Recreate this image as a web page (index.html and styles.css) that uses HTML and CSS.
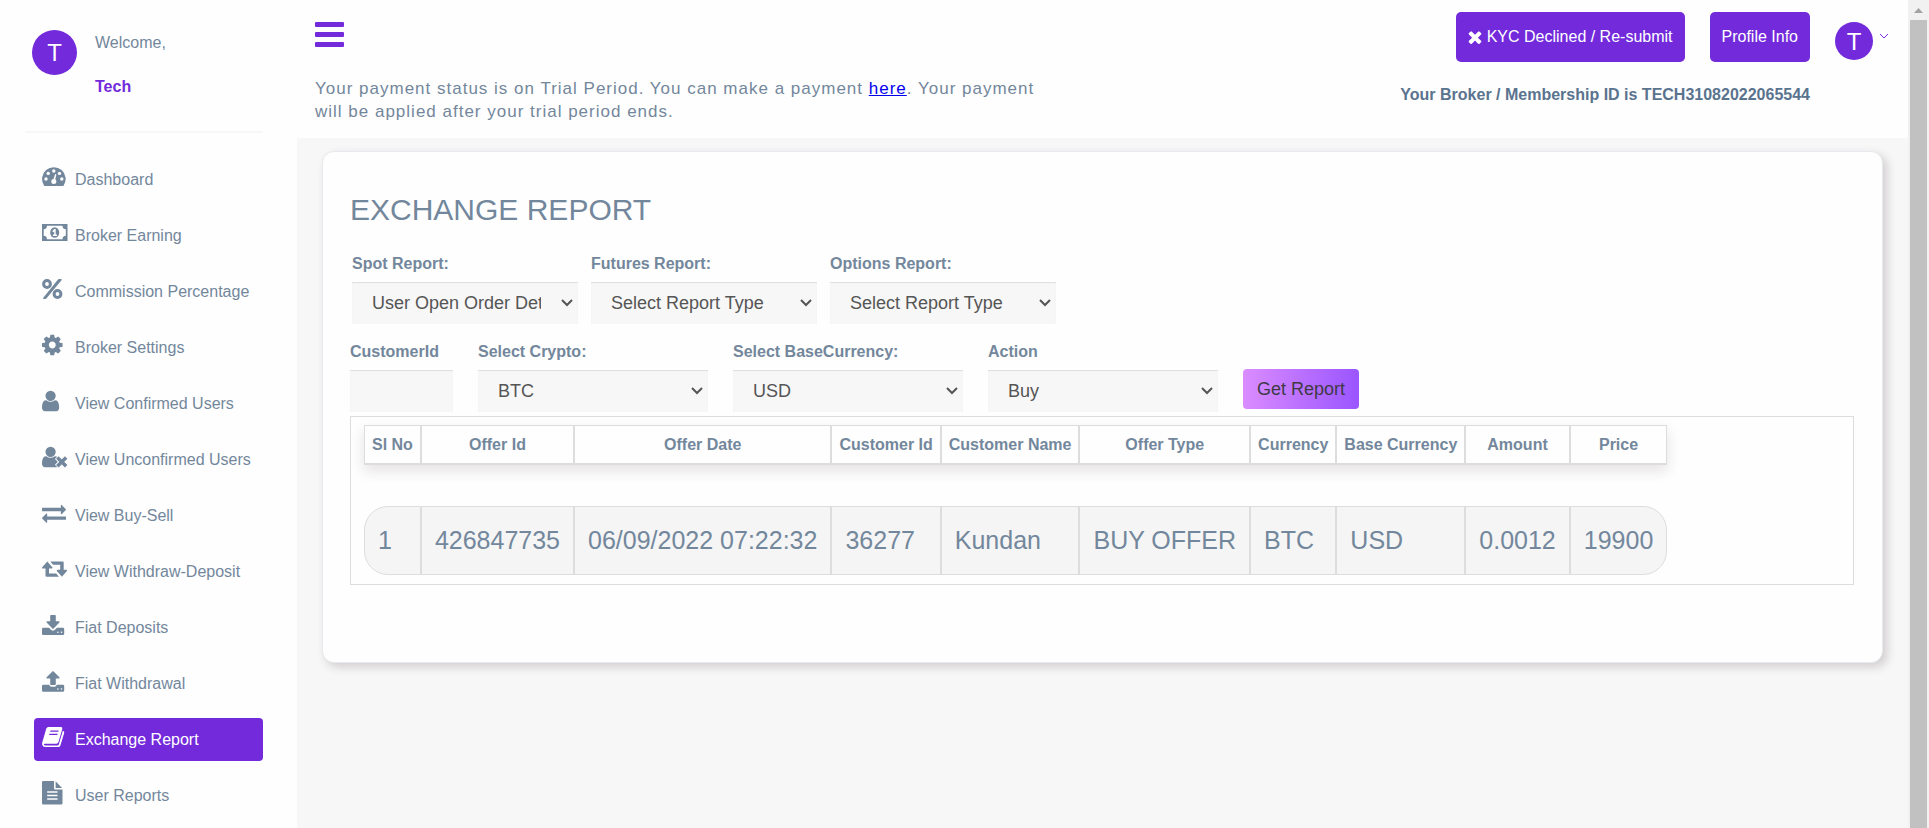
FILE: index.html
```
<!DOCTYPE html>
<html lang="en">
<head>
  <meta charset="UTF-8">
  <meta name="viewport" content="width=device-width, initial-scale=1.0">
  <title>Exchange Report</title>
  <link rel="stylesheet" href="styles.css">
</head>
<body>
  <div class="sidebar">
    <div class="profile">
      <div class="avatar avatar-large">T</div>
      <div class="profile-info">
        <span>Welcome,</span>
        <strong>Tech</strong>
      </div>
    </div>

    <nav class="side-menu">
      <a href="#" class="menu-item">
        <svg class="icon" viewBox="0 0 26 24">
          <path d="M2 20.5A11.8 11.8 0 1 1 21.7 20.5Q21.300 21 20.700 21H3Q2.400 21 2 20.500z"/>
          <g class="cut">
            <circle cx="4" cy="14" r="1.700"/><circle cx="6.200" cy="8.400" r="1.700"/><circle cx="11.800" cy="6" r="1.700"/>
            <circle cx="17.500" cy="8.400" r="1.700"/><circle cx="19.800" cy="14" r="1.700"/><circle cx="11.800" cy="16.600" r="2.500"/>
            <path d="M11 15.500L13.200 9l1.200.4L12.900 16z"/>
          </g>
        </svg>
        <span>Dashboard</span>
      </a>
      <a href="#" class="menu-item">
        <svg class="icon" viewBox="0 0 26 24">
          <path d="M0 3H25.500V20H0z"/>
          <path class="cut" d="M5 4.800H20.500A3.400 3.400 0 0 0 23.800 8.200V14.800A3.400 3.400 0 0 0 20.500 18.200H5A3.400 3.400 0 0 0 1.700 14.800V8.200A3.400 3.400 0 0 0 5 4.800z"/>
          <ellipse cx="12.700" cy="11.500" rx="4.500" ry="5.300"/>
          <path class="cut" d="M12.200 8h1.500v5.600h1.200v1.300h-4v-1.300h1.300v-3.200l-1 .8-.9-1z"/>
        </svg>
        <span>Broker Earning</span>
      </a>
      <a href="#" class="menu-item">
        <svg class="icon" viewBox="0 0 26 24">
          <path d="M17 2h2.200q1 .2.300 1.200L4.500 21.200q-.5.800-1.300.8H1.800q-1.200-.2-.5-1.200L16 2.600q.4-.6 1-.6z"/>
          <g class="ring"><circle cx="5" cy="7" r="3.400"/><circle cx="15.500" cy="17" r="3.400"/></g>
        </svg>
        <span>Commission Percentage</span>
      </a>
      <a href="#" class="menu-item">
        <svg class="icon" viewBox="128 0 1941 1792">
          <path d="M1152 896q0-106-75-181t-181-75-181 75-75 181 75 181 181 75 181-75 75-181zm512-109v222q0 12-8 23t-20 13l-185 28q-19 54-39 91 35 50 107 138 10 12 10 25t-9 23q-27 37-99 108t-94 71q-12 0-26-9l-138-108q-44 23-91 38-16 136-29 186-7 28-36 28h-222q-14 0-24.500-8.500t-11.500-21.500l-28-184q-49-16-90-37l-141 107q-10 9-25 9-14 0-25-11-126-114-165-168-7-10-7-23 0-12 8-23 15-21 51-66.500t54-70.500q-27-50-41-99l-183-27q-13-2-21-12.500t-8-23.500v-222q0-12 8-23t19-13l186-28q14-46 39-92-40-57-107-138-10-12-10-24 0-10 9-23 26-36 98.500-107.500t94.500-71.500q13 0 26 10l138 107q44-23 91-38 16-136 29-186 7-28 36-28h222q14 0 24.500 8.500t11.500 21.500l28 184q49 16 90 37l142-107q9-9 24-9 13 0 25 10 129 119 165 170 7 8 7 22 0 12-8 23-15 21-51 66.500t-54 70.500q26 50 41 98l183 28q13 2 21 12.500t8 23.500z"/>
        </svg>
        <span>Broker Settings</span>
      </a>
      <a href="#" class="menu-item">
        <svg class="icon" viewBox="256 0 1941 1792">
          <path d="M1536 1399q0 109-62.500 187t-150.500 78h-854q-88 0-150.500-78t-62.500-187q0-85 8.500-160.500t31.500-152 58.500-131 94-89 134.500-34.500q131 128 313 128t313-128q76 0 134.500 34.500t94 89 58.500 131 31.500 152 8.500 160.500zm-256-887q0 159-112.500 271.500t-271.500 112.500-271.500-112.500-112.500-271.500 112.500-271.500 271.500-112.500 271.500 112.500 112.500 271.500z"/>
        </svg>
        <span>View Confirmed Users</span>
      </a>
      <a href="#" class="menu-item">
        <svg class="icon" viewBox="256 0 1941 1792">
          <path d="M1536 1399q0 109-62.500 187t-150.500 78h-854q-88 0-150.500-78t-62.500-187q0-85 8.500-160.500t31.500-152 58.500-131 94-89 134.500-34.500q131 128 313 128t313-128q76 0 134.500 34.500t94 89 58.500 131 31.500 152 8.500 160.500zm-256-887q0 159-112.500 271.500t-271.500 112.500-271.500-112.500-112.500-271.500 112.500-271.500 271.500-112.500 271.500 112.500 112.500 271.500z"/>
          <path class="cross-gap" d="M1370 900L2090 1620M2090 900L1370 1620"/>
          <path class="cross" d="M1400 930L2060 1590M2060 930L1400 1590"/>
        </svg>
        <span>View Unconfirmed Users</span>
      </a>
      <a href="#" class="menu-item">
        <svg class="icon" viewBox="0 0 1941 1792">
          <path d="M1792 1184v192q0 13-9.500 22.500t-22.500 9.500h-1376v192q0 13-9.500 22.500t-22.500 9.500q-12 0-24-10l-319-320q-9-9-9-22 0-14 9-23l320-320q9-9 23-9 13 0 22.500 9.500t9.500 22.500v192h1376q13 0 22.500 9.500t9.500 22.500zm0-544q0 14-9 23l-320 320q-9 9-23 9-13 0-22.500-9.500t-9.500-22.500v-192h-1376q-13 0-22.500-9.500t-9.500-22.500v-192q0-13 9.500-22.500t22.500-9.500h1376v-192q0-14 9-23t23-9q12 0 24 10l319 319q9 9 9 23z"/>
        </svg>
        <span>View Buy-Sell</span>
      </a>
      <a href="#" class="menu-item">
        <svg class="icon" viewBox="0 0 26 24">
          <path d="M5.300 4.500l5 5.800q.5 1-.6 1.200H7v5h7.200l2.700 3.300H4.500q-1 0-1-1v-7.300H.8q-1.200-.2-.6-1.200z"/>
          <path d="M19.900 19.800l5-5.800q.5-1-.6-1.200H21.700V5.500q0-1-1-1H8.300L11 7.800h7.200v5H15.500q-1.200.2-.6 1.200z"/>
        </svg>
        <span>View Withdraw-Deposit</span>
      </a>
      <a href="#" class="menu-item">
        <svg class="icon" viewBox="0 0 26 24">
          <path d="M1.300 14.800H7l2.300 2.300q1.700 1.500 3.400 0L15 14.800h5.900q1.300 0 1.300 1.300v4.600q0 1.300-1.300 1.300H1.300Q0 22 0 20.700v-4.600q0-1.300 1.300-1.300z"/>
          <path d="M8.200 2.800q0-.8.800-.8h4q.8 0 .8.800V8.300h3q1.400.2.600 1.300l-5.800 5.800q-.6.600-1.200 0L4.600 9.600q-.8-1.100.6-1.300h3z"/>
          <g class="cut"><circle cx="15.900" cy="19.300" r=".8"/><circle cx="19.500" cy="19.300" r=".8"/></g>
        </svg>
        <span>Fiat Deposits</span>
      </a>
      <a href="#" class="menu-item">
        <svg class="icon" viewBox="0 0 26 24">
          <path d="M1.300 15.800H7.200q.5 1.900 2.300 1.900h3q1.800 0 2.300-1.900h6.100q1.300 0 1.300 1.300v4.300q0 1.300-1.300 1.300H1.300Q0 22.700 0 21.400v-4.300q0-1.300 1.300-1.300z"/>
          <path d="M8.200 15.200q0 .8.800.8h4q.8 0 .8-.8V9.600h3q1.400-.2.600-1.300L11.600 2.400q-.6-.6-1.200 0L4.600 8.300q-.8 1.100.6 1.300h3z"/>
          <g class="cut"><circle cx="15.900" cy="20" r=".8"/><circle cx="19.500" cy="20" r=".8"/></g>
        </svg>
        <span>Fiat Withdrawal</span>
      </a>
      <a href="#" class="menu-item active">
        <svg class="icon" viewBox="0 0 26 24">
          <path d="M6.300 2H19q1.700.2 1.300 1.900L16.500 17q-.5 1.800-2.200 1.800H3q-1.300 0-1.200.8.200.8 1.400.8h12.100q1.200 0 1.600-1.200L20.800 5.700q1.900.6 1.400 2.200L18.400 20.400q-.5 1.600-2.200 1.600H3.300Q.4 21.800.1 18.900q-.1-1.100.3-2L4.300 3.500Q4.800 2 6.300 2z"/>
          <path class="cut" d="M8.500 5.500h8.200l-.4 1.300H8.100zM7.500 8.700h8.200l-.4 1.300H7.100z"/>
        </svg>
        <span>Exchange Report</span>
      </a>
      <a href="#" class="menu-item">
        <svg class="icon" viewBox="0 0 26 24">
          <path d="M1.300 0H12v7.300q0 1.200 1.300 1.200h7.200V22.200q0 1.300-1.300 1.300H1.300Q0 23.500 0 22.200V1.300Q0 0 1.300 0z"/>
          <path d="M13.600.3l6.500 6.600H13.600z"/>
          <path class="cut" d="M5.200 10.300h10.300v1.400H5.200zM5.200 13.800h10.300v1.400H5.200zM5.200 17.300h10.300v1.400H5.200z"/>
        </svg>
        <span>User Reports</span>
      </a>
    </nav>
  </div>

  <div class="main">
    <header class="top-nav">
      <div class="top-row">
        <button type="button" class="menu-toggle" aria-label="Toggle menu">
          <span></span><span></span><span></span>
        </button>
        <div class="top-actions">
          <button type="button" class="btn">
            <svg class="btn-icon" viewBox="302 238 1188 1316">
              <path d="M1490 1322q0 40-28 68l-136 136q-28 28-68 28t-68-28l-294-294-294 294q-28 28-68 28t-68-28l-136-136q-28-28-28-68t28-68l294-294-294-294q-28-28-28-68t28-68l136-136q28-28 68-28t68 28l294 294 294-294q28-28 68-28t68 28l136 136q28 28 28 68t-28 68l-294 294 294 294q28 28 28 68z"/>
            </svg>
            KYC Declined / Re-submit
          </button>
          <button type="button" class="btn">Profile Info</button>
          <a href="#" class="user-menu">
            <span class="avatar">T</span>
            <svg class="caret" viewBox="0 0 10 6"><path d="M1 1l4 4 4-4"/></svg>
          </a>
        </div>
      </div>
      <div class="status-row">
        <p class="payment-status">Your payment status is on Trial Period. You can make a payment <a href="#">here</a>. Your payment will be applied after your trial period ends.</p>
        <p class="member-id">Your Broker / Membership ID is TECH31082022065544</p>
      </div>
    </header>

    <main class="card">
      <h1>EXCHANGE REPORT</h1>

      <form>
        <div class="report-row">
          <div class="field">
            <label for="spot-report">Spot Report:</label>
            <select id="spot-report"><option>User Open Order Details</option></select>
          </div>
          <div class="field">
            <label for="futures-report">Futures Report:</label>
            <select id="futures-report"><option>Select Report Type</option></select>
          </div>
          <div class="field">
            <label for="options-report">Options Report:</label>
            <select id="options-report"><option>Select Report Type</option></select>
          </div>
        </div>

        <div class="filter-row">
          <div class="field field-small">
            <label for="customer-id">CustomerId</label>
            <input type="text" id="customer-id">
          </div>
          <div class="field">
            <label for="crypto">Select Crypto:</label>
            <select id="crypto"><option>BTC</option></select>
          </div>
          <div class="field">
            <label for="base-currency">Select BaseCurrency:</label>
            <select id="base-currency"><option>USD</option></select>
          </div>
          <div class="field">
            <label for="action">Action</label>
            <select id="action"><option>Buy</option></select>
          </div>
          <button type="button" class="btn-report">Get Report</button>
        </div>
      </form>

      <div class="table-wrap">
        <table>
          <thead>
            <tr>
              <th>Sl No</th>
              <th>Offer Id</th>
              <th>Offer Date</th>
              <th>Customer Id</th>
              <th>Customer Name</th>
              <th>Offer Type</th>
              <th>Currency</th>
              <th>Base Currency</th>
              <th>Amount</th>
              <th>Price</th>
            </tr>
          </thead>
          <tbody>
            <tr>
              <td>1</td>
              <td>426847735</td>
              <td>06/09/2022 07:22:32</td>
              <td>36277</td>
              <td>Kundan</td>
              <td>BUY OFFER</td>
              <td>BTC</td>
              <td>USD</td>
              <td>0.0012</td>
              <td>19900</td>
            </tr>
          </tbody>
        </table>
      </div>
    </main>
  </div>

  <div class="scrollbar">
    <div class="scroll-arrow"></div>
    <div class="scroll-thumb"></div>
  </div>
</body>
</html>
```
FILE: styles.css
```
* {
  box-sizing: border-box;
}

body {
  display: flex;
  min-height: 100vh;
  margin: 0;
  background-color: #f7f7f7;
  color: #73879c;
  font-family: Arial, "Liberation Sans", sans-serif;
  font-size: 16px;
  line-height: 23px;
}

button,
input,
select {
  font-family: inherit;
}

.avatar {
  display: flex;
  align-items: center;
  justify-content: center;
  width: 38px;
  height: 38px;
  border-radius: 50%;
  background-color: #722adb;
  color: #fff;
  font-size: 24px;
}

/* Sidebar */
.sidebar {
  flex: none;
  width: 297px;
  padding: 30px 34px 0 25px;
  background-color: #fefefe;
}

.profile {
  display: flex;
  gap: 18px;
  height: 103px;
  padding-left: 7px;
  border-bottom: 2px solid #f7f7f7;
}

.avatar-large {
  width: 45px;
  height: 45px;
}

.profile-info {
  display: flex;
  flex-direction: column;
  gap: 21px;
  padding-top: 1px;
}

.profile-info strong {
  color: #722adb;
}

.side-menu {
  display: flex;
  flex-direction: column;
  gap: 13px;
  padding: 25px 0 11px 9px;
}

.menu-item {
  display: flex;
  align-items: center;
  gap: 7px;
  height: 43px;
  padding-left: 8px;
  border-radius: 4px;
  color: #73879c;
  text-decoration: none;
  white-space: nowrap;
}

.menu-item.active {
  background-color: #722adb;
  color: #fff;
}

.icon {
  flex: none;
  width: 26px;
  height: 24px;
  margin-bottom: 5px;
  fill: currentColor;
}

.icon .cut {
  fill: #fefefe;
}

.icon .ring {
  fill: #fefefe;
  stroke: currentColor;
  stroke-width: 3;
}

.icon .cross {
  stroke: currentColor;
  stroke-width: 260;
}

.icon .cross-gap {
  stroke: #fefefe;
  stroke-width: 420;
}

.icon.icon .cut {
  stroke: none;
}

.active .icon .cut {
  fill: #722adb;
}

/* Top bar */
.main {
  flex: 1;
  min-width: 0;
}

.top-nav {
  padding: 12px 19px 15px 18px;
  background-color: #fefefe;
}

.top-row {
  display: flex;
  justify-content: space-between;
  align-items: flex-start;
}

.menu-toggle {
  display: flex;
  flex-direction: column;
  gap: 5px;
  width: 29px;
  margin-top: 10px;
  padding: 0;
  border: none;
  background: none;
  cursor: pointer;
}

.menu-toggle span {
  width: 100%;
  height: 5px;
  border-radius: 1px;
  background-color: #722adb;
}

.top-actions {
  display: flex;
  gap: 25px;
}

.btn {
  display: flex;
  align-items: center;
  gap: 5px;
  height: 50px;
  padding: 0 12px;
  border: none;
  border-radius: 5px;
  background-color: #722adb;
  color: #fff;
  font-size: 16px;
  cursor: pointer;
}

.btn-icon {
  width: 14px;
  height: 14px;
  fill: #fff;
}

.user-menu {
  display: flex;
  gap: 6px;
  padding-top: 10px;
  text-decoration: none;
}

.caret {
  width: 10px;
  height: 6px;
  margin-top: 11px;
  fill: none;
  stroke: #722adb;
}

.status-row {
  display: flex;
  justify-content: space-between;
  margin-top: 15px;
  padding-right: 79px;
}

.status-row p {
  margin: 0;
}

.payment-status {
  max-width: 730px;
  font-size: 17px;
  letter-spacing: 1px;
}

.payment-status a {
  color: #0000ee;
}

.status-row .member-id {
  padding-top: 6px;
  color: #5a738e;
  font-weight: bold;
}

/* Report card */
.card {
  margin: 13px 25px 25px;
  padding: 41px 28px 77px 27px;
  border: 1px solid #e6e9ed;
  border-radius: 12px;
  background-color: #fefefe;
  box-shadow: 4px 4px 10px rgba(60, 40, 50, 0.2);
}

h1 {
  margin: 0 0 26px;
  font-size: 30px;
  font-weight: normal;
  line-height: 33px;
}

.report-row,
.filter-row {
  display: flex;
  align-items: flex-end;
}

.report-row {
  gap: 13px;
  margin-bottom: 16px;
  padding-left: 2px;
}

.filter-row {
  gap: 25px;
  margin-bottom: 4px;
}

.field {
  display: flex;
  flex-direction: column;
  gap: 7px;
  width: 230px;
}

.report-row .field {
  width: 226px;
}

.filter-row .field-small {
  width: 103px;
}

label {
  font-weight: bold;
}

.field input,
.field select {
  width: 100%;
  height: 42px;
  padding: 0 20px;
  border: none;
  border-radius: 0;
  background-color: #f7f7f7;
  box-shadow: inset 0 1px 1px rgba(0, 0, 0, 0.1);
  color: #555;
  font-size: 18px;
}

.field select {
  padding-right: 37px;
  appearance: none;
  background-image: url("data:image/svg+xml,%3Csvg xmlns='http://www.w3.org/2000/svg' width='12' height='8' fill='none' stroke='%23555' stroke-width='2'%3E%3Cpath d='M1 1l5 5 5-5'/%3E%3C/svg%3E");
  background-position: right 5px center;
  background-repeat: no-repeat;
}

.btn-report {
  height: 40px;
  margin-bottom: 3px;
  padding: 0 14px;
  border: none;
  border-radius: 4px;
  background: linear-gradient(to right, #da8cff, #9a55ff);
  color: #3e3a45;
  font-size: 18px;
  cursor: pointer;
}

/* Results table */
.table-wrap {
  padding: 8px 13px 9px;
  border: 1px solid #ddd;
  overflow-x: auto;
}

table {
  border-spacing: 0;
  white-space: nowrap;
}

thead {
  box-shadow: 0 6px 14px rgba(60, 40, 50, 0.13);
}

th,
td {
  border: 1px solid #ddd;
}

th {
  height: 40px;
  padding: 0 7px;
  border-bottom-width: 2px;
  background-color: #fefefe;
}

/* Space between the header and the first row */
tbody::before {
  content: "";
  display: block;
  height: 41px;
}

td {
  height: 69px;
  padding: 0 13px;
  background-color: #f5f5f5;
  font-size: 25px;
}

td:first-child {
  border-radius: 24px 0 0 24px;
}

td:last-child {
  border-radius: 0 24px 24px 0;
}

/* Scrollbar column */
.scrollbar {
  display: flex;
  flex-direction: column;
  flex: none;
  width: 21px;
  padding: 0 2px;
  background-color: #f1f1f1;
}

.scroll-arrow {
  height: 5px;
  margin: 8px 4px 7px;
  background-color: #a3a3a3;
  clip-path: polygon(50% 0, 100% 100%, 0 100%);
}

.scroll-thumb {
  flex: 1;
  background-color: #c1c1c1;
}
```
